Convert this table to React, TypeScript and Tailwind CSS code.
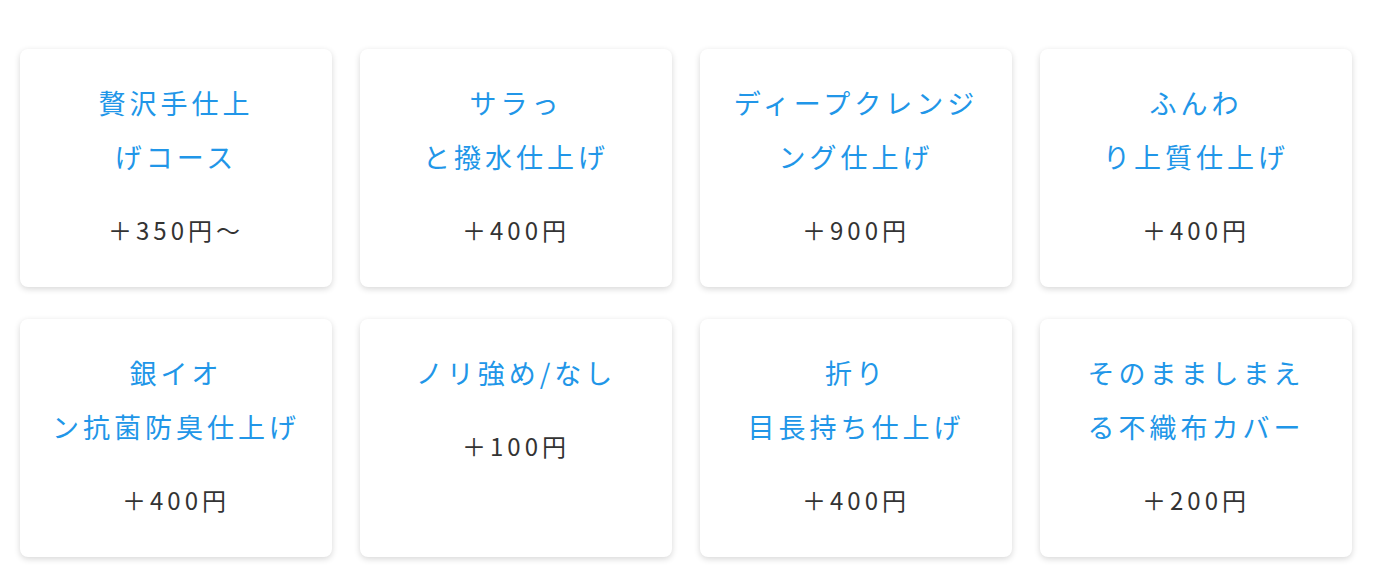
const options = [
  { lines: ["贅沢手仕上", "げコース"], price: "＋350円〜" },
  { lines: ["サラっ", "と撥水仕上げ"], price: "＋400円" },
  { lines: ["ディープクレンジ", "ング仕上げ"], price: "＋900円" },
  { lines: ["ふんわ", "り上質仕上げ"], price: "＋400円" },
  { lines: ["銀イオ", "ン抗菌防臭仕上げ"], price: "＋400円" },
  { lines: ["ノリ強め/なし"], price: "＋100円" },
  { lines: ["折り", "目長持ち仕上げ"], price: "＋400円" },
  { lines: ["そのまましまえ", "る不織布カバー"], price: "＋200円" },
];

export default function App() {
  return (
    <div
      className="min-h-screen bg-white pl-[20px] pt-[49px]"
      style={{ fontFamily: '"Noto Sans CJK JP", "Noto Sans", sans-serif' }}
    >
      <div className="grid grid-cols-[repeat(4,312px)] gap-x-[28px] gap-y-[32px]">
        {options.map((o, i) => (
          <OptionCard key={i} lines={o.lines} price={o.price} />
        ))}
      </div>
    </div>
  );
}

function OptionCard({ lines, price }: { lines: string[]; price: string }) {
  return (
    <div className="h-[238px] rounded-[8px] bg-white pt-[27px] text-center shadow-[0_2px_6px_rgba(0,0,0,0.16)]">
      <div className="text-[27px] leading-[54px] tracking-[4px] text-[#2196e8]">
        {lines.map((l) => (
          <div key={l}>{l}</div>
        ))}
      </div>
      <div className="mt-[28px] text-[24px] leading-[36px] tracking-[4px] text-[#333333]">
        {price}
      </div>
    </div>
  );
}
